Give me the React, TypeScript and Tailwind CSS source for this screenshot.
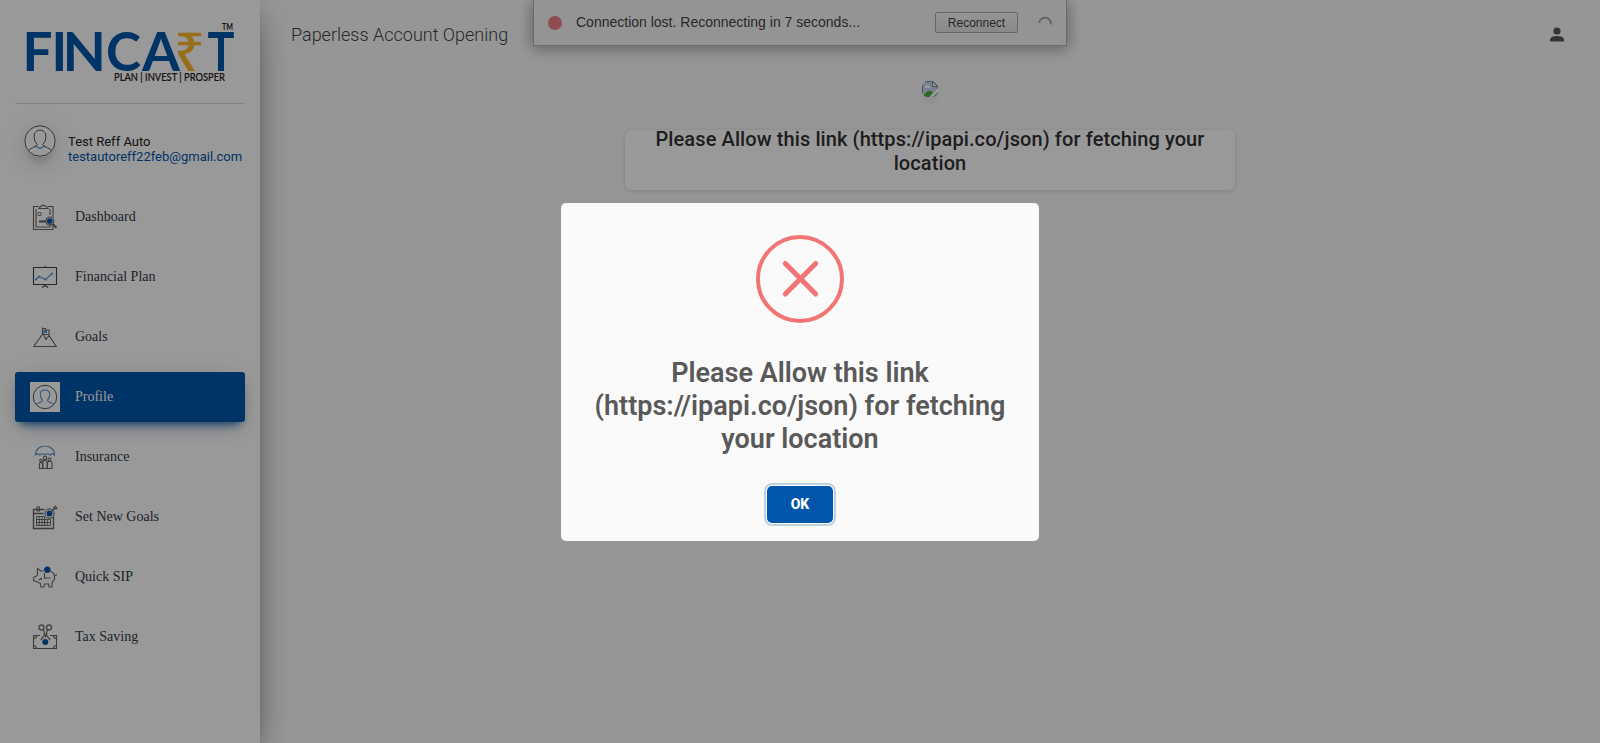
import type { ReactNode } from "react";

const LINE = "#666";
const BLUE = "#0056ab";
const SOFT = "#5b93cc";

function Icon({ top = 0, children }: { top?: number; children: ReactNode }) {
  return (
    <svg viewBox={`0 ${top} 30 30`} className="size-[30px] shrink-0" fill="none" stroke={LINE} strokeWidth="1.1">
      {children}
    </svg>
  );
}

function Logo() {
  return (
    <svg viewBox="0 0 230 86" className="h-[86px] w-[230px]" fill={BLUE}>
      <g fontFamily="Lato, sans-serif" fontWeight="700" fontSize="53">
        <text x="7.500" y="71" textLength="30" lengthAdjust="spacingAndGlyphs">F</text>
        <text x="36.500" y="71">I</text>
        <text x="47.500" y="71" textLength="43.500" lengthAdjust="spacingAndGlyphs">N</text>
        <text x="91" y="71" textLength="35" lengthAdjust="spacingAndGlyphs">C</text>
        <text x="127" y="71" textLength="38" lengthAdjust="spacingAndGlyphs">A</text>
        <text x="192.500" y="71" textLength="27" lengthAdjust="spacingAndGlyphs">T</text>
      </g>
      <text x="159" y="71" fill="#fcb92e" fontFamily="Noto Sans, sans-serif" fontWeight="500" fontSize="53" textLength="31" lengthAdjust="spacingAndGlyphs">₹</text>
      <g fill="#2a2426" fontFamily="Lato, sans-serif">
        <text x="207" y="30" fontSize="8.5" fontWeight="700" textLength="11" lengthAdjust="spacingAndGlyphs">TM</text>
        <text x="99" y="80.8" fontSize="10.800" fontWeight="500" stroke="#2a2426" strokeWidth=".2" textLength="111" lengthAdjust="spacingAndGlyphs">PLAN | INVEST | PROSPER</text>
      </g>
    </svg>
  );
}

const items: { label: string; icon: ReactNode }[] = [
  {
    label: "Dashboard",
    icon: (
      <Icon top={1}>
        <path d="M9 5.500H3.500v23H23v-5M18 5.500h5v11M6 8v18h14v-3M20 14V8" />
        <path d="M9 7.500h9l-2-2.500h-1.200a1.400 1.400 0 0 0-2.600 0H11z" />
        <path d="M8 11.500h3v3H8z" strokeWidth=".8" />
        <path d="M9 20.500h7" strokeWidth="2.200" />
        <circle cx="19.800" cy="20" r="4" />
        <circle cx="19.800" cy="20" r="2.300" fill={BLUE} stroke={BLUE} />
        <path d="M22.500 23l4 3.700" strokeWidth="2" />
      </Icon>
    ),
  },
  {
    label: "Financial Plan",
    icon: (
      <Icon top={2}>
        <path d="M3.500 7.500h23v17h-23zM15 6v1.500M15 24.500v1.500M12 27.500l3-2 3 2" stroke="#444" />
        <path d="M6 19.500l3-3 6.500 3L22 13.500" stroke={SOFT} />
        <g fill={SOFT} stroke="none">
          <circle cx="6" cy="19.500" r="1.100" />
          <circle cx="9" cy="16.500" r="1.100" />
          <circle cx="15.500" cy="19.500" r="1.100" />
          <circle cx="22" cy="13.500" r="1.100" />
        </g>
      </Icon>
    ),
  },
  {
    label: "Goals",
    icon: (
      <Icon top={1.5}>
        <path d="M3 26h24M4 25.500l9-12.500 3 6 3-4 7 10.500M12.500 14V7M12.500 8h3v1.500h3.500v4.500h-6.500" />
        <path d="M13.500 9.500h3.500v3h-3.500z" fill={SOFT} stroke="none" />
      </Icon>
    ),
  },
  {
    label: "Profile",
    icon: (
      <svg viewBox="0 0 30 30" className="size-[30px] shrink-0 bg-white" fill="none">
        <circle cx="15" cy="15" r="11.700" stroke="#555" strokeWidth="1" />
        <path d="M6.500 22.500c2-2.500 6-1.500 6-4.500-1.500-1.500-2.200-3-2.200-5.500 0-6 9.400-6 9.400 0 0 2.500-.7 4-2.200 5.500 0 3 4 2 6 4.500" stroke={SOFT} strokeWidth="1.100" />
      </svg>
    ),
  },
  {
    label: "Insurance",
    icon: (
      <Icon top={1.5}>
        <path d="M5.500 14.500c0-12 19-12 19 0-1.500-1.500-3-1.500-4.500 0-1.500-1.500-3.500-1.500-5 0-1.500-1.500-3.500-1.500-5 0-1.500-1.500-3-1.500-4.500 0zM15 5v1" stroke={SOFT} />
        <circle cx="15" cy="17.500" r="1.700" />
        <circle cx="11" cy="20" r="1.300" />
        <circle cx="19.500" cy="19" r="1.500" />
        <path d="M9.500 28v-5q1.500-2 3 0v5zM13 28v-7q2-2.500 4 0v7zM17.500 28v-6q2.200-2.500 4.500 0v6z" />
      </Icon>
    ),
  },
  {
    label: "Set New Goals",
    icon: (
      <Icon top={1}>
        <path d="M3.500 8.500h11M3.500 8v19.500h20V16M3.500 12.500h10" strokeWidth="1.400" />
        <path d="M7 6h2.500v4H7z" />
        <path d="M6.500 15.500h8v9h-8zM6.500 18.500h14v6h-14zM6.500 21.500h14M9.200 15.500v9M12 15.500v9M14.800 17v8M17.600 18v7" strokeWidth=".9" />
        <circle cx="19.500" cy="12.500" r="4.600" stroke="#777" />
        <circle cx="19.500" cy="12.500" r="2.400" fill={BLUE} stroke={BLUE} />
        <path d="M20 12l5.500-5.500M24 8V6l2-1M24.500 8h2l.5-2" />
      </Icon>
    ),
  },
  {
    label: "Quick SIP",
    icon: (
      <Icon top={2}>
        <path d="M13.500 11h-2.500L7.500 8.500V14.500l-1 1.500-3 1.500v3l4 1.500 3 1.500.5 3.500h3l.5-3h4l.5 3h3v-4l2.500-4c.500-4-1-7-5-8M25 15.500l2-1" />
        <path d="M8.500 20l3-1.500v1.500M14.500 13v6M14.500 18h6" />
        <circle cx="17.300" cy="9.700" r="3" fill={BLUE} stroke={BLUE} strokeWidth=".6" />
      </Icon>
    ),
  },
  {
    label: "Tax Saving",
    icon: (
      <Icon top={0.5}>
        <path d="M10 14H3.500v13h23v-13H20M3.500 17q3 0 3-3M26.500 17q-3 0-3-3M3.500 24q3 0 3 3M26.500 24q-3 0-3 3" />
        <circle cx="11.500" cy="6" r="2.500" strokeWidth="1.400" stroke="#777" />
        <circle cx="19" cy="6" r="2.500" strokeWidth="1.400" stroke="#777" />
        <path d="M13.500 8.500l.8 2.500v3l-3.500 4.500M17.500 8.500l-.8 2.500v3l3.500 4.500M15.500 12v4" strokeWidth="1.300" stroke="#777" />
        <circle cx="15.300" cy="20.500" r="2.700" fill={BLUE} stroke={BLUE} strokeWidth=".6" />
      </Icon>
    ),
  },
];

function Sidebar() {
  return (
    <aside className="relative z-10 flex w-[260px] shrink-0 flex-col bg-white px-[15px] shadow-[0_16px_38px_-12px_rgba(0,0,0,0.56),0_4px_25px_0_rgba(0,0,0,0.12),0_8px_10px_-5px_rgba(0,0,0,0.2)]">
      <div className="h-[104px] border-b border-[#b4b4b4]/50">
        <Logo />
      </div>
      <div className="flex pt-[21px] pl-[9px]">
        <svg viewBox="0 0 32 32" className="size-8 shrink-0 rounded-full shadow-[0_10px_30px_-12px_rgba(0,0,0,0.42),0_4px_25px_0_rgba(0,0,0,0.12),0_8px_10px_-5px_rgba(0,0,0,0.2)]" fill="none" stroke="#555">
          <circle cx="16" cy="16" r="15.200" fill="#fff" />
          <path d="M5 25.500c2-3.500 8-3.500 8.200-6-2-2-3-4.500-3-8 0-8.500 11.600-8.500 11.600 0 0 3.500-1 6-3 8 .2 2.500 6.200 2.500 8.200 6" />
          <path d="M12 20.500c1.500 3.500 6.500 3.500 8 0" stroke={BLUE} />
        </svg>
        <div className="pt-[9px] pl-3 font-['Roboto',sans-serif] text-[13px] leading-[15px] whitespace-nowrap">
          <p className="text-[#222]">Test Reff Auto</p>
          <p className="text-[#0056ab]">testautoreff22feb@gmail.com</p>
        </div>
      </div>
      <nav className="mt-[28px] flex flex-col gap-[10px]">
        {items.map((item) => (
          <a
            key={item.label}
            className={
              "flex h-[50px] items-center gap-[15px] rounded-[3px] px-[15px] font-['Liberation_Serif',serif] text-[14px] " +
              (item.label === "Profile"
                ? "bg-[#0056ab] text-white shadow-[0_12px_20px_-10px_rgba(0,86,171,0.28),0_4px_20px_0_rgba(0,0,0,0.12),0_7px_8px_-5px_rgba(0,86,171,0.8)]"
                : "text-[#333a48]")
            }
          >
            {item.icon}
            <span className="pb-px">{item.label}</span>
          </a>
        ))}
      </nav>
    </aside>
  );
}

function ConnectionNotice() {
  return (
    <div className="absolute top-0 left-[533px] flex h-[46px] w-[534px] items-center border border-t-0 border-[#b4b4b4] bg-[#f7f7f7] pr-[14px] pl-[14px] font-['Liberation_Sans',sans-serif] text-[#444] shadow-[0_2px_15px_rgba(0,0,0,0.4)]">
      <span className="size-[14px] rounded-full bg-[#ed8183]" />
      <span className="ml-[14px] text-[14px] whitespace-nowrap">Connection lost. Reconnecting in 7 seconds...</span>
      <button className="ml-auto h-[21px] w-[83px] rounded-[2px] border border-[#aaa] bg-linear-to-b from-[#fafafa] to-[#e4e4e4] text-[12px] leading-none">
        Reconnect
      </button>
      <svg viewBox="0 0 14 14" className="ml-[20px] size-[14px]" fill="none" stroke="#aaa" strokeWidth="2">
        <path d="M1 7A6 6 0 0 1 13 8.500" />
      </svg>
    </div>
  );
}

function BrokenImage() {
  return (
    <svg viewBox="0 0 16 16" className="size-4 rounded-[6px] shadow-[0_5px_15px_-8px_rgba(0,0,0,0.24),0_8px_10px_-5px_rgba(0,0,0,0.2)]">
      <path d="M.5.500h10.500l4.500 4.500v10.500H.500z" fill="#c5d6f4" stroke="#888" />
      <path d="M10.500.500V5.500h5z" fill="#fff" stroke="#777" strokeWidth=".9" />
      <path d="M3 6q0-2 2-2 2-1 2.500 1.500Q9 6 8 7H3z" fill="#fff" />
      <path d="M1 15.500q5-9 10-4l-3 4z" fill="#4fae36" />
      <path d="M16 7L7.500 16h3.500l5-5z" fill="#fff" />
      <path d="M14 13l2-1v4h-4z" fill="#4fae36" />
    </svg>
  );
}

function AlertDialog() {
  return (
    <div className="absolute inset-0 z-20 flex items-start justify-center bg-black/40 pt-[203px]">
      <div className="flex h-[338px] w-[478px] flex-col items-center rounded-[5px] bg-[#fafafa] font-['Roboto',sans-serif]">
        <svg viewBox="0 0 88 88" className="mt-[32px] size-[88px]" fill="none" stroke="#f27474">
          <circle cx="44" cy="44" r="42" strokeWidth="4" />
          <path d="M29.300 28.500l30.400 30.500M59.700 28.500L29.300 59" strokeWidth="5" strokeLinecap="round" />
        </svg>
        <h2 className="mt-[34px] w-[438px] text-center text-[27px] leading-[33px] font-semibold text-[#595959]">
          Please Allow this link (https://ipapi.co/json) for fetching your location
        </h2>
        <button className="mt-[30px] h-[37px] w-[66px] rounded-[5px] bg-[#0056ab] text-[14px] font-extrabold text-white shadow-[0_0_0_1px_#fff,0_0_0_3px_rgba(43,114,165,0.29)]">
          OK
        </button>
      </div>
    </div>
  );
}

export default function App() {
  return (
    <div className="relative flex h-[743px] w-[1600px] overflow-hidden bg-[#fafafa]">
      <Sidebar />
      <main className="min-w-0 flex-1 font-['Roboto',sans-serif]">
        <header className="flex h-[69px] items-center justify-between pr-[33px] pl-[31px]">
          <h1 className="text-[18px] font-light text-[#444]">Paperless Account Opening</h1>
          <svg viewBox="0 0 20 20" className="size-5" fill="#555">
            <circle cx="10" cy="6" r="3.600" />
            <path d="M3 16.500v-2c0-2.500 4-3.500 7-3.500s7 1 7 3.500v2z" />
          </svg>
        </header>
        <section className="flex flex-col items-center pt-[12px]">
          <BrokenImage />
          <div className="mt-[33px] h-[60px] w-[610px] rounded-[6px] bg-white px-5 text-center text-[20px] leading-[24px] font-medium tracking-[0.1px] text-[#333] shadow-[0_1px_4px_0_rgba(0,0,0,0.14)]">
            <p className="-mt-[3px]">Please Allow this link (https://ipapi.co/json) for fetching your location</p>
          </div>
        </section>
      </main>
      <ConnectionNotice />
      <AlertDialog />
    </div>
  );
}
